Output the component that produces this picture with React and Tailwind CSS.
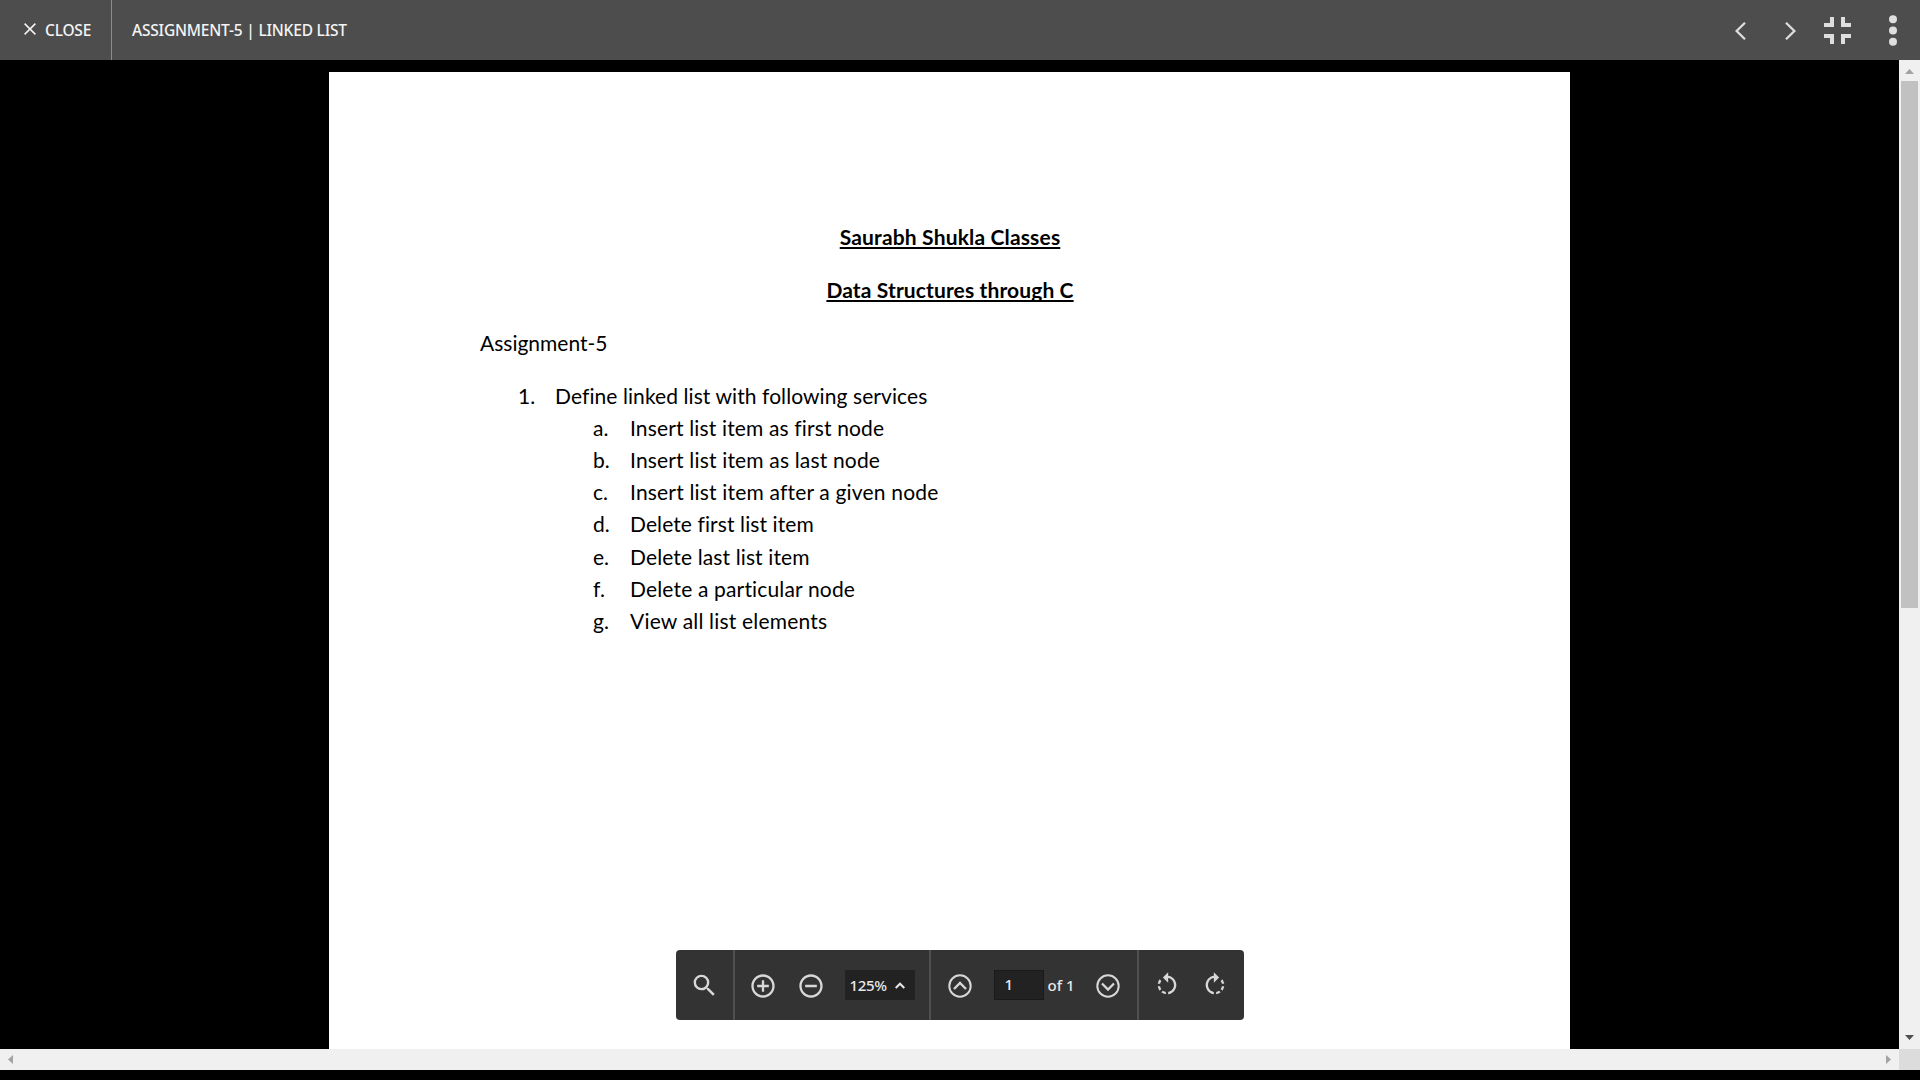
import { MdSearch, MdAddCircleOutline, MdRemoveCircleOutline, MdRotateLeft, MdRotateRight } from "react-icons/md";

const services = [
  { mark: "a.", text: "Insert list item as first node", spacing: "tracking-[0.15px]" },
  { mark: "b.", text: "Insert list item as last node", spacing: "tracking-[0.17px]" },
  { mark: "c.", text: "Insert list item after a given node", spacing: "tracking-[0.18px]" },
  { mark: "d.", text: "Delete first list item", spacing: "tracking-[0.1px]" },
  { mark: "e.", text: "Delete last list item", spacing: "tracking-[0.12px]" },
  { mark: "f.", text: "Delete a particular node", spacing: "tracking-[0.16px]" },
  { mark: "g.", text: "View all list elements", spacing: "tracking-[0.19px]" },
];

function Header() {
  return (
    <header className="flex h-[60px] shrink-0 items-stretch bg-[#4d4d4d] font-['Noto_Sans'] text-[15.5px] leading-[60px] font-medium text-[#f4f4f4]">
      <button className="flex w-[112px] items-center border-r border-[#8c8c8c] pl-6">
        <svg className="mr-[9px] size-3 -translate-y-px" viewBox="0 0 12 12" fill="none" stroke="currentColor" strokeWidth="1.5">
          <path d="M.6.6l10.8 10.8M11.4.6L.6 11.4" />
        </svg>
        <span className="tracking-[-0.2px]">CLOSE</span>
      </button>
      <h1 className="pl-5 tracking-[-0.2px]">ASSIGNMENT-5 | LINKED LIST</h1>
      <div className="ml-auto flex items-center pt-[2px] pr-[23.5px] text-[#dedede]">
        <svg className="mr-[39px] h-[18px] w-[11px]" viewBox="0 0 11 18" fill="none" stroke="currentColor" strokeWidth="2.3">
          <path d="M10 .8L1.6 9l8.4 8.2" />
        </svg>
        <svg className="mr-[28.5px] h-[18px] w-[11px]" viewBox="0 0 11 18" fill="none" stroke="currentColor" strokeWidth="2.3">
          <path d="M1 .8L9.4 9 1 17.2" />
        </svg>
        <svg className="mr-[37.5px] mb-px size-[27px]" viewBox="0 0 27 27" fill="none" stroke="currentColor" strokeWidth="4">
          <path d="M0 8h8V0M27 8h-8V0M0 19h8v8M27 19h-8v8" />
        </svg>
        <svg className="mb-px h-[31px] w-2" viewBox="0 0 8 31" fill="currentColor">
          <circle cx="4" cy="4.2" r="4" />
          <circle cx="4" cy="15.5" r="4" />
          <circle cx="4" cy="26.8" r="4" />
        </svg>
      </div>
    </header>
  );
}

function Title({ children, spacing }) {
  return (
    <h2 className="mb-[21px] pl-px text-center font-bold underline decoration-2 underline-offset-[2px] [text-decoration-skip-ink:none]">
      <span className={spacing}>{children}</span>
    </h2>
  );
}

function Page() {
  return (
    <article className="ml-[329px] mt-3 w-[1241px] bg-white pt-[149px] font-[Lato] text-[21px] leading-[32px] text-black [font-variant-ligatures:none]">
      <Title spacing="tracking-[0.16px]">Saurabh Shukla Classes</Title>
      <Title spacing="tracking-[0.12px]">Data Structures through C</Title>
      <p className="mb-[21px] pl-[151px]">Assignment-5</p>
      <div className="flex pl-[189px]">
        <span className="w-[37px]">1.</span>
        <span className="tracking-[0.08px]">Define linked list with following services</span>
      </div>
      <ul className="pl-[264px] leading-[32.125px]">
        {services.map((s) => (
          <li key={s.mark} className="flex">
            <span className="w-[37px]">{s.mark}</span>
            <span className={s.spacing}>{s.text}</span>
          </li>
        ))}
      </ul>
    </article>
  );
}

function Chevron({ d }) {
  return (
    <svg className="size-6" viewBox="0 0 24 24" fill="none" stroke="currentColor" strokeWidth="2">
      <circle cx="12" cy="12" r="10.7" />
      <path d={d} strokeWidth="2.3" />
    </svg>
  );
}

function Toolbar() {
  return (
    <div className="absolute left-[676px] top-[950px] flex h-[70px] w-[568px] rounded bg-[#333] font-['Noto_Sans'] text-[15px] font-medium text-[#e8e8e8]">
      <div className="flex w-[59px] items-center border-r-2 border-[#505050] pl-[14px]">
        <MdSearch className="mt-px size-[29px] text-[#d8d8d8]" />
      </div>
      <div className="flex w-[196px] items-center border-r-2 border-[#505050] pl-[14px]">
        <MdAddCircleOutline className="mt-0.5 size-7 text-[#d8d8d8]" />
        <MdRemoveCircleOutline className="ml-[19.5px] mt-0.5 size-7 text-[#d8d8d8]" />
        <button className="ml-5 flex h-[30px] w-[70px] items-center bg-[#222] pl-[5px]">
          <span className="tracking-[-0.3px]">125%</span>
          <svg className="ml-[8px] h-[7px] w-[10px]" viewBox="0 0 10 7" fill="none" stroke="currentColor" strokeWidth="2">
            <path d="M.7 6L5 1.7 9.3 6" />
          </svg>
        </button>
      </div>
      <div className="flex w-[208px] items-center border-r-2 border-[#505050] pl-[16.500px] text-[#d8d8d8]">
        <span className="mt-0.5"><Chevron d="M6 15l6-6 6 6" /></span>
        <span className="ml-[22px] h-[30px] w-[50.500px] border border-[#1a1a1a] bg-[#222] pl-[10px] leading-[26px] text-[#eee]">1</span>
        <span className="ml-[3.500px] text-[#e8e8e8]">of 1</span>
        <span className="ml-auto mr-[17px] mt-0.5"><Chevron d="M6 9.500l6 6 6-6" /></span>
      </div>
      <div className="flex items-center pl-[14px] text-[#d8d8d8]">
        <MdRotateLeft className="size-7" />
        <MdRotateRight className="ml-[19.500px] size-7" />
      </div>
    </div>
  );
}

export default function App() {
  return (
    <div className="relative flex h-[1080px] w-[1920px] flex-col overflow-hidden bg-black">
      <Header />
      <div className="flex h-[989px] shrink-0">
        <main className="flex w-[1899px] overflow-hidden">
          <Page />
        </main>
        <div className="flex w-[21px] flex-col items-center bg-[#f0f0f0]">
          <svg className="h-[21px] w-[21px] shrink-0" viewBox="0 0 21 21" fill="#a3a3a3"><path d="M6 14l4.5-5 4.5 5z" /></svg>
          <div className="h-[527px] w-[17px] bg-[#c1c1c1]" />
          <svg className="mt-auto h-[21px] w-[21px] shrink-0" viewBox="0 0 21 21" fill="#505050"><path d="M6 7l4.5 5L15 7z" /></svg>
        </div>
      </div>
      <div className="flex h-[21px] shrink-0 bg-[#f0f0f0]">
        <svg className="size-[21px]" viewBox="0 0 21 21" fill="#a3a3a3"><path d="M13 6L8 10.500l5 4.500z" /></svg>
        <svg className="ml-auto size-[21px]" viewBox="0 0 21 21" fill="#a3a3a3"><path d="M8 6l5 4.500L8 15z" /></svg>
        <div className="w-[21px] bg-[#dcdcdc]" />
      </div>
      <Toolbar />
    </div>
  );
}
